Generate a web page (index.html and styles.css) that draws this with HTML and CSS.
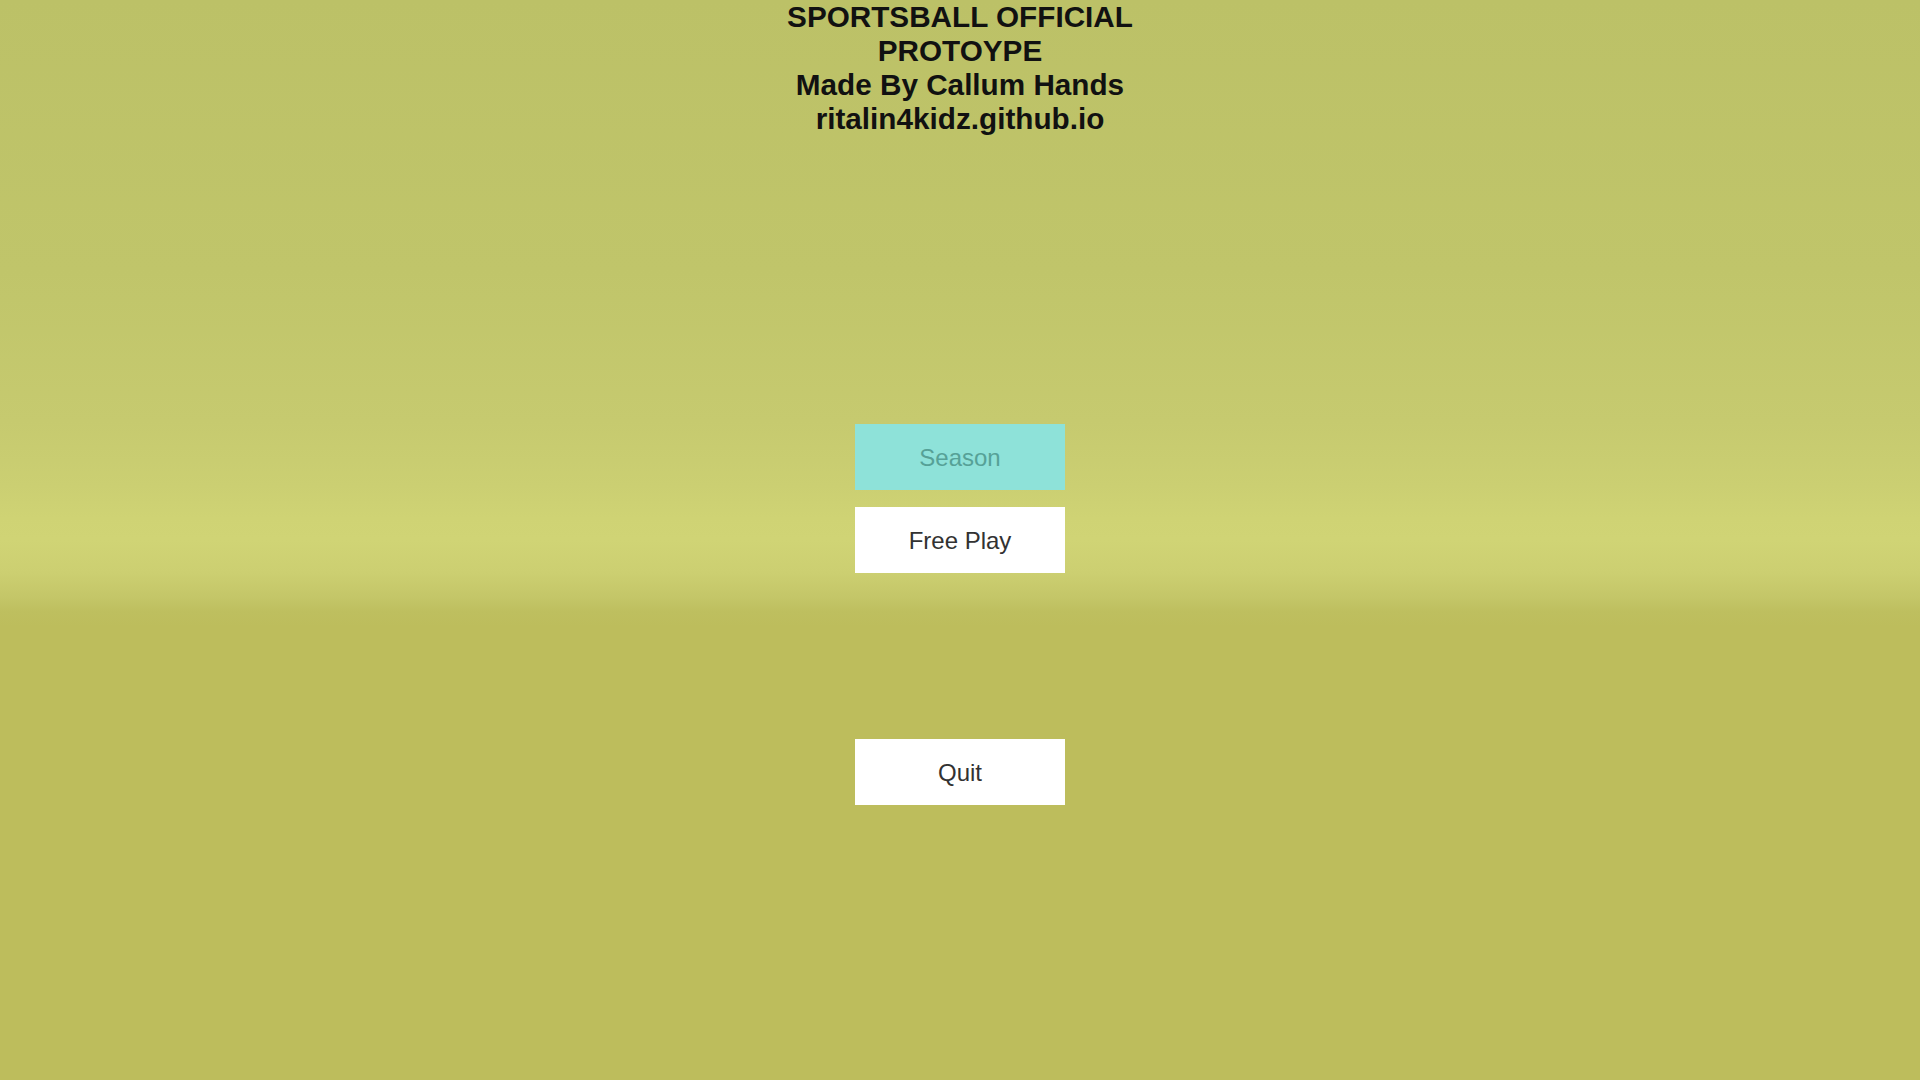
FILE: index.html
```html
<!DOCTYPE html>
<html>
<head>
<meta charset="utf-8">
<link rel="stylesheet" href="styles.css">
</head>
<body>
<div class="screen">
  <h1 class="title">SPORTSBALL OFFICIAL<br>PROTOYPE<br>Made By Callum Hands<br>ritalin4kidz.github.io</h1>
  <div class="menu">
    <div class="btn btn-season">Season</div>
    <div class="btn">Free Play</div>
    <div class="btn btn-quit">Quit</div>
  </div>
</div>
</body>
</html>
```
FILE: styles.css
```css
html, body {
  margin: 0;
  padding: 0;
  height: 100%;
}
body {
  font-family: "Liberation Sans", Arial, sans-serif;
  background: linear-gradient(to bottom,
    #bcc167 0%,
    #c0c56a 25%,
    #c6ca6f 39%,
    #cbcf72 45%,
    #cfd374 48%,
    #d0d475 50%,
    #cccf71 53%,
    #c4c668 55.3%,
    #bebf5f 56.6%,
    #bdbd5c 58%,
    #bdbd5c 100%);
  overflow: hidden;
}
.screen {
  height: 1080px;
  display: flex;
  flex-direction: column;
  align-items: center;
}
.title {
  margin: 0;
  font-size: 29.7px;
  line-height: 34px;
  font-weight: bold;
  color: #111;
  text-align: center;
}
.menu {
  margin-top: 288px;
  display: flex;
  flex-direction: column;
  align-items: center;
  gap: 17px;
}
.btn {
  width: 210px;
  height: 66px;
  box-sizing: border-box;
  padding-top: 2px;
  background: #ffffff;
  color: #323232;
  font-size: 24px;
  display: flex;
  align-items: center;
  justify-content: center;
}
.btn-season {
  background: #8ee2d9;
  color: #56a197;
}
.btn-quit {
  margin-top: 149px;
}
```
